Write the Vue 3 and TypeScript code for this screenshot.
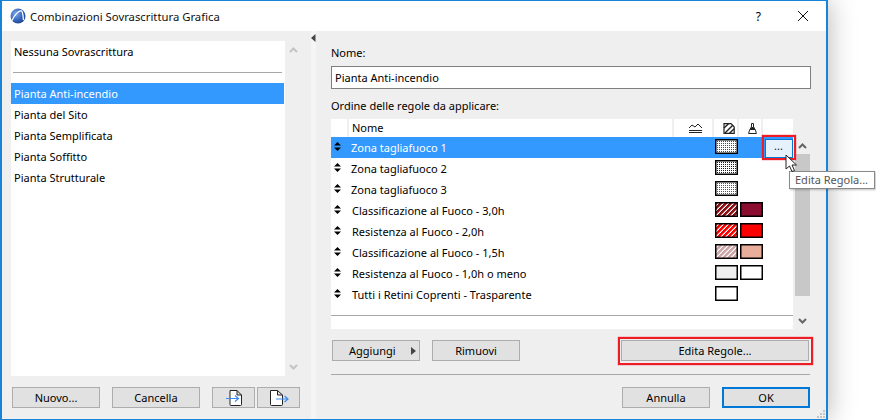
<script setup lang="ts">
interface Swatch { kind: 'dots' | 'hatch' | 'solid'; color: string; bg?: string }
interface Rule { name: string; first?: Swatch; second?: Swatch; shift?: boolean }

const plans: string[] = ['Pianta del Sito', 'Pianta Semplificata', 'Pianta Soffitto', 'Pianta Strutturale']

const rules: Rule[] = [
  { name: 'Zona tagliafuoco 1', first: { kind: 'dots', color: '#ff0000' } },
  { name: 'Zona tagliafuoco 2', first: { kind: 'dots', color: '#0000ff' } },
  { name: 'Zona tagliafuoco 3', first: { kind: 'dots', color: '#008a3c' } },
  { name: 'Classificazione al Fuoco - 3,0h', shift: true, first: { kind: 'hatch', color: '#8c0f14' }, second: { kind: 'solid', color: '#8b0d2f' } },
  { name: 'Resistenza al Fuoco - 2,0h', shift: true, first: { kind: 'hatch', color: '#ff0000' }, second: { kind: 'solid', color: '#ff0000' } },
  { name: 'Classificazione al Fuoco - 1,5h', shift: true, first: { kind: 'hatch', color: '#cfa6a6' }, second: { kind: 'solid', color: '#e8ad9b' } },
  { name: 'Resistenza al Fuoco - 1,0h o meno', shift: true, first: { kind: 'solid', color: '#efefef' }, second: { kind: 'solid', color: '#ffffff' } },
  { name: 'Tutti i Retini Coprenti - Trasparente', shift: true, first: { kind: 'solid', color: '#ffffff' } }
]
</script>

<template>
  <div class="window">
    <header class="titlebar">
      <svg class="logo" width="16" height="16" viewBox="0 0 16 16">
        <defs>
          <radialGradient id="ball" cx="0.35" cy="0.35" r="0.8">
            <stop offset="0" stop-color="#7fa8e8" />
            <stop offset="0.6" stop-color="#2f5fb8" />
            <stop offset="1" stop-color="#1c3a7a" />
          </radialGradient>
        </defs>
        <circle cx="8" cy="8" r="7.5" fill="url(#ball)" />
        <path d="M2 12.5C5 6 9 2.5 11.5 3C13 4 13.2 8 13.4 12" fill="none" stroke="#fff" stroke-width="1.3" />
      </svg>
      <span class="title">Combinazioni Sovrascrittura Grafica</span>
      <span class="help">?</span>
      <svg class="close" width="12" height="12" viewBox="0 0 12 12">
        <path d="M1 1L11 11M11 1L1 11" stroke="#111" stroke-width="1" fill="none" />
      </svg>
    </header>

    <div class="body">
      <section class="left">
        <div class="list-wrap">
          <div class="list">
            <div class="list-row">Nessuna Sovrascrittura</div>
            <div class="list-sep"></div>
            <div class="list-row selected">Pianta Anti-incendio</div>
            <div v-for="p in plans" :key="p" class="list-row">{{ p }}</div>
          </div>
          <div class="list-scroll">
            <svg width="9" height="6" viewBox="0 0 9 6"><path d="M1 5L4.5 1.5L8 5" class="chev light" /></svg>
            <svg width="9" height="6" viewBox="0 0 9 6"><path d="M1 1L4.5 4.5L8 1" class="chev light" /></svg>
          </div>
        </div>
        <div class="left-buttons">
          <button class="btn wide">Nuovo...</button>
          <button class="btn wide">Cancella</button>
          <div class="icon-buttons">
            <button class="btn icon">
              <svg width="22" height="16" viewBox="0 0 22 16">
                <path d="M7 0.5H14L18.5 5V14.5Q18.5 15.5 17.5 15.5H8Q7 15.5 7 14.5Z M14 0.5V5H18.5" fill="#fff" stroke="#222" stroke-width="1" />
                <path d="M3 8.5H15M12 5.5L15.5 8.5L12 11.5" fill="none" stroke="#3b8cf5" stroke-width="1.2" />
              </svg>
            </button>
            <button class="btn icon">
              <svg width="22" height="16" viewBox="0 0 22 16">
                <path d="M2.5 0.5H9.5L14.5 5V14.5Q14.5 15.5 13.5 15.5H3.5Q2.5 15.5 2.5 14.5Z M9.5 0.5V5H14.5" fill="#fff" stroke="#222" stroke-width="1" />
                <path d="M8 9H19.5M16.5 6L20 9L16.5 12" fill="none" stroke="#3b8cf5" stroke-width="1.2" />
              </svg>
            </button>
          </div>
        </div>
      </section>

      <div class="splitter">
        <svg width="5" height="8" viewBox="0 0 5 8"><path d="M4.5 0V8L0 4Z" fill="#444" /></svg>
      </div>

      <section class="right">
        <label class="label">Nome:</label>
        <div class="input">Pianta Anti-incendio</div>
        <label class="label second">Ordine delle regole da applicare:</label>

        <div class="table-wrap">
          <div class="table">
            <div class="grid head">
              <span class="cell divider"></span>
              <span class="cell divider head-name">Nome</span>
              <span class="cell divider center ic-a">
                <svg width="15" height="11" viewBox="0 0 15 11">
                  <path d="M1 5L4 2L7 4L10 1L14 5" fill="none" stroke="#222" stroke-width="1" />
                  <path d="M1 7.5H14M1 9.5H14" stroke="#222" stroke-width="1" />
                </svg>
              </span>
              <span class="cell divider center ic-b">
                <svg width="12" height="11" viewBox="0 0 12 11">
                  <path d="M1 0.7H8L11.2 4V10.3H1Z" fill="none" stroke="#222" stroke-width="1.2" />
                  <path d="M1 5L5.5 0.7M2 10L10 2M6.5 10.3L11.2 5.8" stroke="#222" stroke-width="1.4" />
                </svg>
              </span>
              <span class="cell divider center ic-c">
                <svg width="9" height="11" viewBox="0 0 9 11">
                  <path d="M3.5 0.5H5.5V4.5H3.5Z" fill="none" stroke="#222" stroke-width="1" />
                  <path d="M2 4.5H7V6.5H2Z" fill="#222" />
                  <path d="M1.7 6.5H7.3L8.4 10.5H0.6Z" fill="none" stroke="#222" stroke-width="1" />
                </svg>
              </span>
              <span class="cell"></span>
            </div>

            <div v-for="(r, i) in rules" :key="r.name" class="grid row" :class="{ selected: i === 0 }">
              <span class="cell center handle">
                <svg width="7" height="9" viewBox="0 0 7 9"><path d="M3.5 0L7 3.4H0ZM3.5 9L0 5.6H7Z" fill="#000" /></svg>
              </span>
              <span class="cell name" :class="{ shift: r.shift }">{{ r.name }}</span>
              <span class="cell"></span>
              <span class="cell swatch-cell">
                <svg v-if="r.first" class="swatch" width="23" height="15" viewBox="0 0 23 15">
                  <defs>
                    <pattern v-if="r.first.kind === 'dots'" :id="'p' + i" width="2" height="2" patternUnits="userSpaceOnUse">
                      <rect width="2" height="2" fill="#fff" />
                      <rect width="1" height="1" :fill="r.first.color" />
                    </pattern>
                    <pattern v-if="r.first.kind === 'hatch'" :id="'p' + i" width="5" height="5" patternUnits="userSpaceOnUse">
                      <rect width="5" height="5" :fill="r.first.color" />
                      <path d="M4 0H5V1H4ZM3 1H4V2H3ZM2 2H3V3H2ZM1 3H2V4H1ZM0 4H1V5H0Z" fill="#fff" />
                      <path d="M3 0H4V1H3ZM2 1H3V2H2ZM1 2H2V3H1ZM0 3H1V4H0ZM4 4H5V5H4Z" fill="#fff" fill-opacity="0.5" />
                    </pattern>
                  </defs>
                  <rect x="0.75" y="0.75" width="21.5" height="13.5" :fill="r.first.kind === 'solid' ? r.first.color : 'url(#p' + i + ')'" stroke="#000" stroke-width="1.5" />
                </svg>
              </span>
              <span class="cell swatch-cell">
                <svg v-if="r.second" class="swatch" width="23" height="15" viewBox="0 0 23 15">
                  <rect x="0.75" y="0.75" width="21.5" height="13.5" :fill="r.second.color" stroke="#000" stroke-width="1.5" />
                </svg>
              </span>
              <span class="cell center">
                <button v-if="i === 0" class="more">...</button>
              </span>
            </div>

            <div class="table-sep"></div>
          </div>

          <div class="table-scroll">
            <svg class="up" width="9" height="6" viewBox="0 0 9 6"><path d="M1 5L4.5 1.5L8 5" class="chev" /></svg>
            <div class="track"></div>
            <svg class="down" width="9" height="6" viewBox="0 0 9 6"><path d="M1 1L4.5 4.5L8 1" class="chev" /></svg>
          </div>
        </div>

        <div class="actions">
          <button class="btn wide add">
            <span>Aggiungi</span>
            <svg width="5" height="8" viewBox="0 0 5 8"><path d="M0 0V8L5 4Z" fill="#444" /></svg>
          </button>
          <button class="btn wide">Rimuovi</button>
          <button class="btn edit">Edita Regole...</button>
        </div>

        <div class="sep"></div>

        <div class="footer">
          <button class="btn wide">Annulla</button>
          <button class="btn wide ok">OK</button>
        </div>
      </section>
    </div>

    <svg class="grip" width="8" height="8" viewBox="0 0 8 8">
      <path d="M6 0H8V2H6ZM3 3H5V5H3ZM6 3H8V5H6ZM0 6H2V8H0ZM3 6H5V8H3ZM6 6H8V8H6Z" fill="#c4c4c4" />
    </svg>

    <div class="tooltip">Edita Regola...</div>
    <svg class="cursor" width="14" height="19" viewBox="0 0 14 19">
      <path d="M1 1V15L4.5 12L7 17.5L9.5 16.5L7 11H11.5Z" fill="#fff" stroke="#222" stroke-width="1" />
    </svg>
  </div>
</template>

<style scoped>
.window {
  position: relative;
  box-sizing: border-box;
  width: 828px;
  height: 420px;
  display: flex;
  flex-direction: column;
  border: solid #1883d7;
  border-width: 1px 2px 1px 2px;
  background: #efefef;
  box-shadow: 0 0 26px rgba(0, 0, 0, 0.3);
  font-family: "Noto Sans", sans-serif;
  font-size: 11px;
  color: #000;
}
.titlebar {
  height: 30px;
  flex: none;
  display: flex;
  align-items: center;
  background: #fff;
  padding-left: 8px;
}
.logo { flex: none; }
.title { margin-left: 4px; font-size: 11.3px; color: #111; flex: 1; }
.help { font-size: 12px; margin-right: 36px; }
.close { margin-right: 17px; }
.body { flex: 1; display: flex; min-height: 0; }
.left {
  width: 309px;
  flex: none;
  padding: 10px 0 0 9px;
  box-sizing: border-box;
}
.list-wrap { display: flex; height: 335px; }
.list { width: 274px; background: #fff; }
.list-row { height: 21px; line-height: 21px; padding-left: 3px; width: 273px; box-sizing: border-box; }
.list-row.selected { background: #3399ff; color: #fff; }
.list-sep { height: 1px; background: #a8a8a8; margin: 10px 3px 10px 2px; }
.list-scroll {
  width: 16px;
  display: flex;
  flex-direction: column;
  justify-content: space-between;
  align-items: center;
  padding: 6px 0;
  box-sizing: border-box;
}
.chev { fill: none; stroke: #666; stroke-width: 2; }
.chev.light { stroke: #c4c4c4; }
.left-buttons { display: flex; gap: 12px; margin: 11px 0 0 1px; }
.icon-buttons { display: flex; gap: 2px; }
.btn {
  box-sizing: border-box;
  height: 21px;
  padding: 0;
  border: 1px solid #adadad;
  background: #e1e1e1;
  font: inherit;
  color: #000;
  display: flex;
  align-items: center;
  justify-content: center;
}
.btn.wide { width: 88px; }
.btn.icon { width: 43px; }
.splitter {
  width: 5px;
  flex: none;
  background: #f5f5f5;
  padding-top: 3px;
  box-sizing: border-box;
  line-height: 0;
}
.right {
  flex: 1;
  display: flex;
  flex-direction: column;
  padding: 14px 16px 0 15px;
  box-sizing: border-box;
  min-width: 0;
}
.label { height: 16px; line-height: 16px; display: block; }
.label.second { margin-top: 9px; }
.input {
  margin-top: 5px;
  margin-right: -1px;
  height: 23px;
  line-height: 21px;
  box-sizing: border-box;
  border: 1px solid #7f7f7f;
  background: #fff;
  padding-left: 3px;
}
.table-wrap { margin-top: 5px; height: 210px; display: flex; gap: 2px; }
.table { width: 462px; background: #fff; }
.grid {
  display: grid;
  grid-template-columns: 18px 325px 40px 25px 24px 30px;
}
.head { height: 18px; }
.cell { display: flex; align-items: center; min-width: 0; }
.divider { border-right: 2px solid #efefef; box-sizing: border-box; }
.center { justify-content: center; }
.head-name { padding: 0 0 2px 3px; box-sizing: border-box; }
.ic-a { padding-left: 5px; box-sizing: border-box; }
.ic-b { padding-left: 6px; box-sizing: border-box; }
.ic-c { padding-left: 5px; box-sizing: border-box; }
.row { height: 21px; line-height: 21px; }
.row.selected { background: #3399ff; color: #fff; }
.name { padding-left: 2px; white-space: nowrap; }
.name.shift { padding-left: 3px; }
.handle { padding-bottom: 3px; padding-right: 6px; box-sizing: border-box; }
.swatch-cell { align-items: flex-start; padding: 2px 0 0 1px; box-sizing: border-box; }
.swatch { display: block; flex: none; }
.more {
  position: relative;
  box-sizing: border-box;
  width: 28px;
  height: 19px;
  padding: 0 0 5px;
  border: 1px solid #0078d7;
  background: #e5f1fb;
  color: #222;
  font: inherit;
  line-height: 8px;
  margin-left: 1px;
  margin-top: 1px;
}
.more::after {
  content: "";
  position: absolute;
  left: -4px;
  right: -4px;
  top: -5px;
  bottom: -3px;
  border: 2px solid #ee1c25;
  box-shadow: 0 0 1px #ee1c25;
  pointer-events: none;
}
.table-sep { height: 1px; background: #a8a8a8; margin-top: 10px; }
.table-scroll {
  width: 15px;
  display: flex;
  flex-direction: column;
  align-items: center;
}
.table-scroll .up { margin-top: 24px; flex: none; }
.track { width: 15px; height: 142px; margin-top: 5px; background: #c8c8c8; flex: none; }
.table-scroll .down { margin-top: 22px; flex: none; }
.actions { display: flex; gap: 12px; margin: 11px 0 0 1px; }
.add { justify-content: flex-start; gap: 15px; padding-left: 16px; }
.edit { position: relative; width: 188px; margin-left: 89px; }
.edit::after {
  content: "";
  position: absolute;
  left: -4px;
  right: -5px;
  top: -4px;
  bottom: -5px;
  border: 2px solid #ee1c25;
  box-shadow: 0 0 1px #ee1c25;
  pointer-events: none;
}
.sep { height: 1px; background: #a8a8a8; margin-top: 13px; }
.footer { display: flex; justify-content: flex-end; gap: 12px; margin-top: 12px; }
.ok { border: 2px solid #0078d7; }
.grip { position: absolute; right: 1px; bottom: 1px; }
.tooltip {
  position: absolute;
  left: 787px;
  top: 170px;
  width: 86px;
  height: 18px;
  box-sizing: border-box;
  border: 1px solid #8a8a8a;
  background: #fff;
  color: #555;
  line-height: 16px;
  padding-left: 5px;
  white-space: nowrap;
  box-shadow: 1px 1px 2px rgba(0, 0, 0, 0.25);
}
.cursor { position: absolute; left: 783px; top: 153px; }
</style>

<style>
html, body { background: #fff; overflow: hidden; }
</style>
